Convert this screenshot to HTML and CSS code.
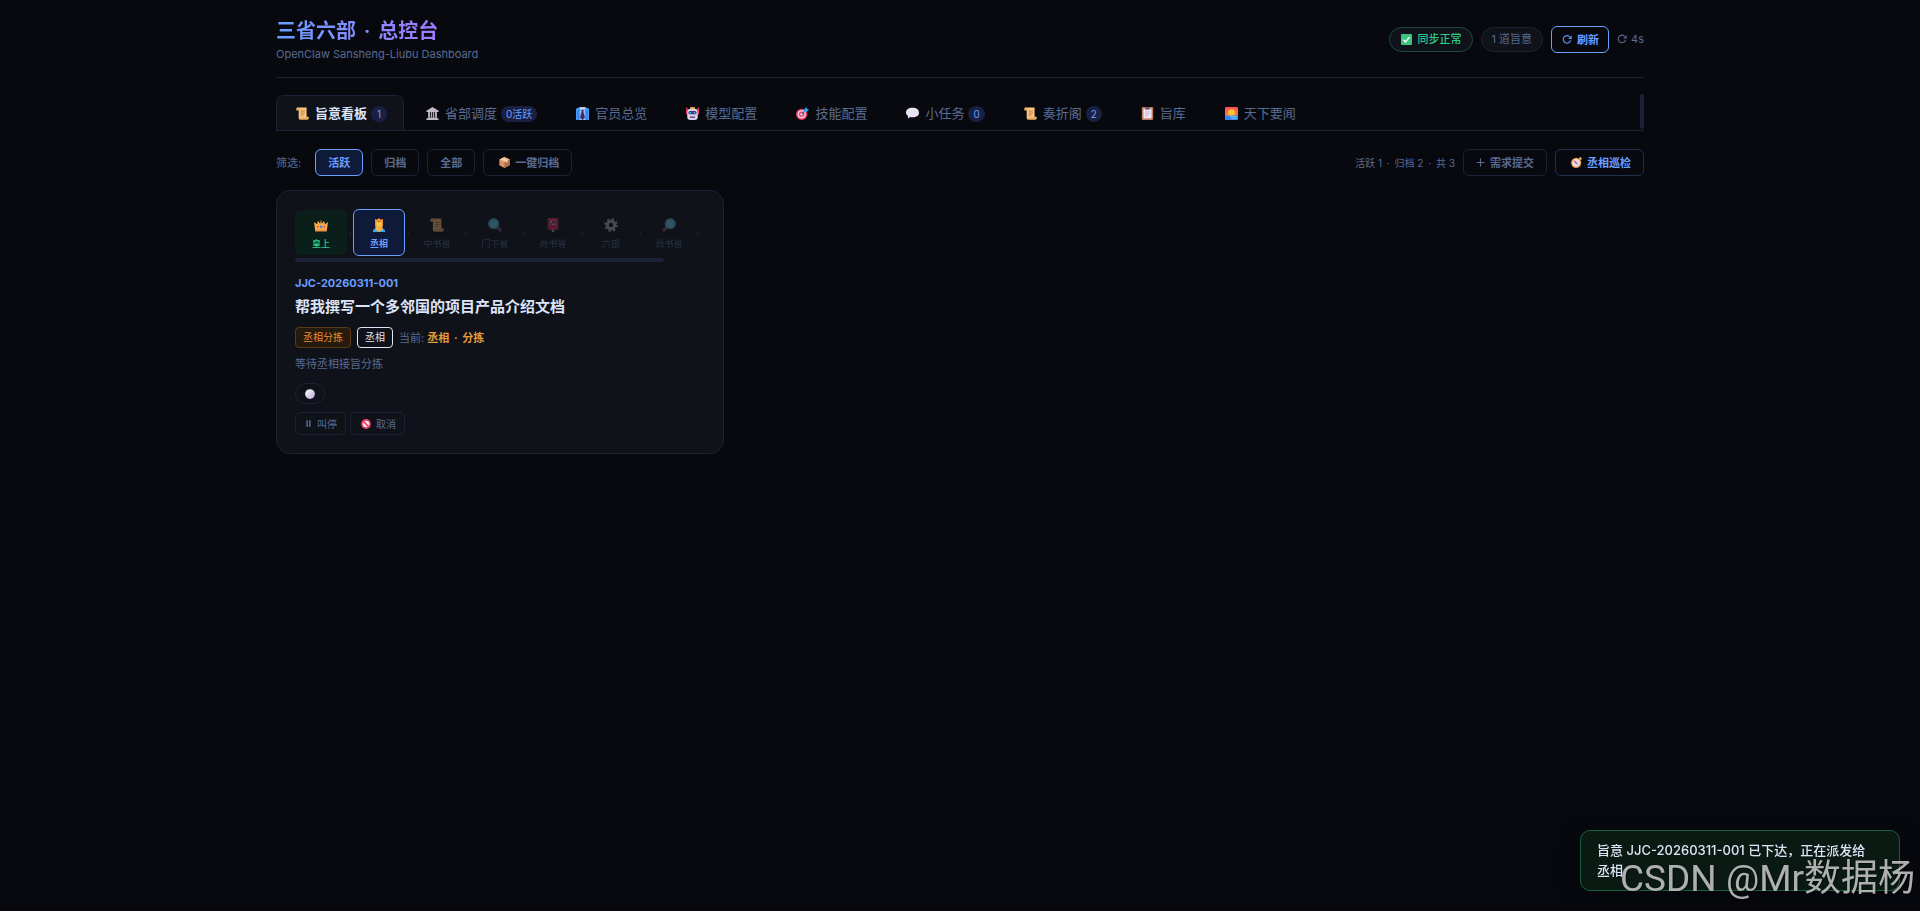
FILE: index.html
```html
<!DOCTYPE html>
<html lang="zh-CN">
<head>
<meta charset="UTF-8">
<meta name="viewport" content="width=device-width, initial-scale=1">
<title>三省六部 · 总控台</title>
<link rel="stylesheet" href="styles.css">
</head>
<body>
<svg class="sprite" aria-hidden="true">
  <defs>
    <linearGradient id="ball" x1="0" y1="0" x2="1" y2="1"><stop offset="0" stop-color="#fff"/><stop offset="1" stop-color="#bfa8d8"/></linearGradient>
    <linearGradient id="sky" x1="0" y1="0" x2="0" y2="1"><stop offset="0" stop-color="#fb4f5e"/><stop offset="1" stop-color="#ff8a4a"/></linearGradient>
  </defs>
  <symbol id="i-scroll" viewBox="0 0 16 16">
    <path d="M0.500 3C.5 1 1.500 .5 2.500 .5H13V12H15.500V13.500C15.500 15 14.500 15.500 13.500 15.500H5C4 15.500 3.300 14.500 3.300 13.500V4H.5Z" fill="#fbc57c"/>
    <path d="M.5 3C.5 1 1.500 .5 2.500 .5S4 1.700 4 2.500V4H.5ZM5 13H15.500C15.500 14.800 14.500 15.500 13.500 15.500H5Z" fill="#e9a863"/>
    <path d="M5.500 5H11M5.500 7.500H11M5.500 10H9.500" stroke="#bd7044" stroke-width="1"/>
  </symbol>
  <symbol id="i-temple" viewBox="0 0 16 16">
    <path d="M8 0L15.500 4.500V6H.5V4.500ZM2 13H14V14H15.500V16H.5V14H2Z" fill="#c2b8c8"/>
    <path d="M2.500 6H5V13H2.500ZM6 6H7.500V13H6ZM8.500 6H10V13H8.500ZM11 6H13.500V13H11Z" fill="#b4aabe"/>
  </symbol>
  <symbol id="i-tie" viewBox="0 0 16 16">
    <path d="M0 2L5 0H11L16 2V16H0Z" fill="#459df5"/><path d="M2.500 4V16M13.500 4V16" stroke="#2a6fd6" stroke-width="1"/>
    <path d="M4 .5H12L8 6Z" fill="#e9e2f4"/><path d="M5 3L8 5L11 3V16H5Z" fill="#8bc4fa"/>
    <path d="M6.500 3H9.500L9 5.500L11 13L8 16L5 13L7 5.500Z" fill="#4a2467"/>
  </symbol>
  <symbol id="i-robot" viewBox="0 0 16 16">
    <path d="M0 1H2V9H0ZM14 1H16V9H14Z" fill="#e3345f"/><path d="M5 0H11V3H5Z" fill="#e89a3c"/>
    <rect x="1.500" y="2" width="13" height="14" rx="4" fill="#dccfe8"/><rect x="3" y="5" width="10" height="4" rx="2" fill="#35305c"/>
    <circle cx="5.500" cy="7" r="1.200" fill="#4bb5fa"/><circle cx="10.500" cy="7" r="1.200" fill="#4bb5fa"/><path d="M5 12.500H11" stroke="#3a2c55" stroke-width="1.500"/>
  </symbol>
  <symbol id="i-target" viewBox="0 0 16 16">
    <circle cx="7" cy="9" r="7" fill="#ed3f66"/><circle cx="7" cy="9" r="5" fill="#f5d8e4"/><circle cx="7" cy="9" r="3.400" fill="#ed3f66"/><circle cx="7" cy="9" r="1.500" fill="#fff"/>
    <path d="M7 9L13 3" stroke="#215fa5" stroke-width="1.400"/><path d="M10 3L13 0L13.500 2.500L16 3L13 6H10Z" fill="#35a6ee"/>
  </symbol>
  <symbol id="i-bubble" viewBox="0 0 16 16"><path d="M8 1C13 1 16 3.500 16 7S13 12.500 8 12.500C7 12.500 6 12.400 5.200 12.200L2.500 14V11C1 10 0 8.700 0 7C0 3.500 3 1 8 1Z" fill="#eae1f3"/></symbol>
  <symbol id="i-clip" viewBox="0 0 16 16"><rect x="1" y="0" width="14" height="16" rx="1.500" fill="#c47a5c"/><path d="M3 2H13V14H3Z" fill="#f1e8f8"/><rect x="5" y="0" width="6" height="3.500" rx="1" fill="#6d617b"/><path d="M5 6H11M5 8.500H11M5 11H9" stroke="#b8abc8"/></symbol>
  <symbol id="i-sunrise" viewBox="0 0 16 16"><rect width="16" height="16" rx="1.500" fill="url(#sky)"/><circle cx="8" cy="7" r="4.300" fill="#fdc52b"/><path d="M0 10.500H16V14.500A1.500 1.500 0 0 1 14.500 16H1.500A1.500 1.500 0 0 1 0 14.500Z" fill="#3b82f6"/><path d="M6 12H15M8 14H14" stroke="#69d1fa" stroke-width="1.200"/></symbol>
  <symbol id="i-box" viewBox="0 0 16 16"><path d="M8 0L15.500 3.500V12L8 16L.5 12V3.500Z" fill="#d99465"/><path d="M8 7.500L15.500 3.500V12L8 16Z" fill="#b16c48"/><path d="M8 0L15.500 3.500L8 7.500L.5 3.500Z" fill="#edb98c"/><path d="M4 1.900L11.500 5.600V8.500" fill="none" stroke="#f9dfc0" stroke-width="1.600"/></symbol>
  <symbol id="i-check" viewBox="0 0 16 16"><rect width="16" height="16" rx="1.500" fill="#3fc380"/><path d="M3.500 8.500L6.500 11.500L12.500 4.500" fill="none" stroke="#fff" stroke-width="2"/></symbol>
  <symbol id="i-refresh" viewBox="0 0 16 16"><path d="M13.800 9.300A6 6 0 1 1 12.600 4" fill="none" stroke="currentColor" stroke-width="1.700"/><path d="M15.500 1.500V7H10Z" fill="currentColor"/></symbol>
  <symbol id="i-plus" viewBox="0 0 16 16"><path d="M8 1V15M1 8H15" stroke="currentColor" stroke-width="2"/></symbol>
  <symbol id="i-compass" viewBox="0 0 16 16"><circle cx="13.500" cy="2.500" r="2" fill="#f4ae3a"/><circle cx="7.500" cy="8.500" r="7.500" fill="#e99a38"/><circle cx="7.500" cy="8.500" r="5.600" fill="#e7deee"/><path d="M4 5L8.200 7.800L6.800 9.200Z" fill="#e63958" stroke="#e63958" stroke-width=".6"/><path d="M11 12L8.200 7.800L6.800 9.200Z" fill="#7b6f8c"/></symbol>
  <symbol id="i-crown" viewBox="0 0 16 16"><path d="M0 4.500L3.500 7L4.500 3L7 6.500L8 1.500L9 6.500L11.500 3L12.500 7L16 4.500L14.500 15H1.500Z" fill="#fbab47"/><path d="M1.500 15L1.200 13H14.800L14.500 15Z" fill="#f0954a"/><circle cx="8" cy="10" r="1.500" fill="#3d7df0"/><circle cx="4.300" cy="10" r="1" fill="#e63958"/><circle cx="11.700" cy="10" r="1" fill="#e63958"/></symbol>
  <symbol id="i-prince" viewBox="0 0 16 16"><path d="M3.500 1L6 2L8 0L10 2L12.500 1V10H3.500Z" fill="#f59e32"/><circle cx="8" cy="6.500" r="3" fill="#fcc64c"/><path d="M1 16C1 12.500 4 11.500 8 11.500S15 12.500 15 16Z" fill="#38a5ee"/><path d="M4.500 9H11.500L12.500 13L8 16L3.500 13Z" fill="#f7b048"/><path d="M6 4H10" stroke="#b9552d" stroke-width="1"/></symbol>
  <symbol id="i-lens" viewBox="0 0 16 16"><path d="M10 10L14 14" stroke="#8a4a78" stroke-width="3.400" stroke-linecap="round"/><circle cx="6.500" cy="6.500" r="5.700" fill="#6fd0e4" stroke="#3b9ac0" stroke-width="1.500"/></symbol>
  <symbol id="i-post" viewBox="0 0 16 16"><path d="M6.500 12H9.500V16H6.500Z" fill="#a99bb0"/><rect x="2" y="0" width="12" height="13.500" rx="1.500" fill="#e0315d"/><path d="M5 3H11V8H5Z" fill="#cfc1d8"/><path d="M6 7.500L8 4.500H10V6.500" fill="none" stroke="#5b2444" stroke-width="1.500"/></symbol>
  <symbol id="i-gear" viewBox="0 0 16 16"><circle cx="8" cy="8" r="4.200" fill="none" stroke="#b5aabd" stroke-width="3.400"/><circle cx="8" cy="8" r="6.600" fill="none" stroke="#b5aabd" stroke-width="2.400" stroke-dasharray="2.600 2.584"/></symbol>
  <symbol id="i-ball" viewBox="0 0 16 16"><circle cx="8" cy="8" r="7.800" fill="url(#ball)"/></symbol>
  <symbol id="i-pause" viewBox="0 0 16 16"><path d="M5.500 2V14M10.500 2V14" stroke="currentColor" stroke-width="2.600"/></symbol>
  <symbol id="i-ban" viewBox="0 0 16 16"><circle cx="8" cy="8" r="6.600" fill="#f8ecf4" stroke="#ec3f64" stroke-width="2.600"/><path d="M3.500 3.500L12.500 12.500" stroke="#ec3f64" stroke-width="2.600"/></symbol>
</svg>

<div class="wrap">
  <header class="hdr">
    <div>
      <h1 class="logo">三省六部 <span class="sep-lg">·</span> 总控台</h1>
      <p class="sub">OpenClaw Sansheng-Liubu Dashboard</p>
    </div>
    <div class="hdr-right">
      <span class="chip chip-ok"><svg class="ico"><use href="#i-check"/></svg>同步正常</span>
      <span class="chip">1 道旨意</span>
      <button class="btn btn-refresh" type="button"><svg class="ico"><use href="#i-refresh"/></svg>刷新</button>
      <span class="countdown"><svg class="ico"><use href="#i-refresh"/></svg>4s</span>
    </div>
  </header>

  <div class="tabs">
    <nav class="tab-list">
      <button class="tab active" type="button"><svg class="ico"><use href="#i-scroll"/></svg>旨意看板<span class="badge">1</span></button>
      <button class="tab" type="button"><svg class="ico"><use href="#i-temple"/></svg>省部调度<span class="badge">0活跃</span></button>
      <button class="tab" type="button"><svg class="ico"><use href="#i-tie"/></svg>官员总览</button>
      <button class="tab" type="button"><svg class="ico"><use href="#i-robot"/></svg>模型配置</button>
      <button class="tab" type="button"><svg class="ico"><use href="#i-target"/></svg>技能配置</button>
      <button class="tab" type="button"><svg class="ico"><use href="#i-bubble"/></svg>小任务<span class="badge">0</span></button>
      <button class="tab" type="button"><svg class="ico"><use href="#i-scroll"/></svg>奏折阁<span class="badge">2</span></button>
      <button class="tab" type="button"><svg class="ico"><use href="#i-clip"/></svg>旨库</button>
      <button class="tab" type="button"><svg class="ico"><use href="#i-sunrise"/></svg>天下要闻</button>
    </nav>
    <div class="thumb-y"></div>
  </div>

  <div class="filters">
    <span class="filter-label">筛选:</span>
    <button class="btn on" type="button">活跃</button>
    <button class="btn" type="button">归档</button>
    <button class="btn" type="button">全部</button>
    <button class="btn" type="button"><svg class="ico"><use href="#i-box"/></svg>一键归档</button>
    <span class="counts">活跃 1 <span class="sep">·</span> 归档 2 <span class="sep">·</span> 共 3</span>
    <button class="btn" type="button"><svg class="ico ico-plus"><use href="#i-plus"/></svg>需求提交</button>
    <button class="btn btn-scan" type="button"><svg class="ico"><use href="#i-compass"/></svg>丞相巡检</button>
  </div>

  <main class="grid">
    <article class="card">
      <div class="pipe">
        <div class="node done"><svg class="node-ico"><use href="#i-crown"/></svg><span>皇上</span></div><span class="arrow">›</span>
        <div class="node current"><svg class="node-ico"><use href="#i-prince"/></svg><span>丞相</span></div><span class="arrow">›</span>
        <div class="node"><svg class="node-ico"><use href="#i-scroll"/></svg><span>中书省</span></div><span class="arrow">›</span>
        <div class="node"><svg class="node-ico"><use href="#i-lens"/></svg><span>门下省</span></div><span class="arrow">›</span>
        <div class="node"><svg class="node-ico"><use href="#i-post"/></svg><span>尚书省</span></div><span class="arrow">›</span>
        <div class="node"><svg class="node-ico"><use href="#i-gear"/></svg><span>六部</span></div><span class="arrow">›</span>
        <div class="node"><svg class="node-ico flip"><use href="#i-lens"/></svg><span>尚书省</span></div><span class="arrow">›</span>
      </div>
      <div class="thumb-x"></div>
      <div class="task-id">JJC-20260311-001</div>
      <h2 class="task-title">帮我撰写一个多邻国的项目产品介绍文档</h2>
      <div class="meta">
        <span class="tag tag-state">丞相分拣</span>
        <span class="tag tag-dept">丞相</span>
        <span class="now">当前: <b>丞相 <span class="sep">·</span> 分拣</b></span>
      </div>
      <p class="hint">等待丞相接旨分拣</p>
      <div class="heart"><svg class="ico"><use href="#i-ball"/></svg></div>
      <div class="actions">
        <button class="act" type="button"><svg class="ico ico-pause"><use href="#i-pause"/></svg>叫停</button>
        <button class="act" type="button"><svg class="ico"><use href="#i-ban"/></svg>取消</button>
      </div>
    </article>
  </main>
</div>

<div class="toast" role="status">旨意 JJC-20260311-001 已下达，正在派发给丞相</div>
<div class="watermark">CSDN @Mr数据杨</div>
</body>
</html>
```
FILE: styles.css
```css
:root {
  --bg: #07090f;
  --panel: #0f1219;
  --line: #1c2236;
  --text: #dde4f8;
  --muted: #5a6b92;
  --acc: #6a9eff;
  --acc2: #a07aff;
  --ok: #2ecc8a;
}
* { box-sizing: border-box; }
body {
  margin: 0;
  min-height: 100vh;
  background: var(--bg);
  color: var(--text);
  font-family: Inter, "Noto Sans CJK SC", sans-serif;
  font-size: 13px;
  line-height: 20px;
}
button { font-family: inherit; cursor: pointer; }
h1, h2, p { margin: 0; }
.sprite { position: absolute; width: 0; height: 0; }
.ico { width: 11px; height: 11px; flex: none; margin: 0 5px 0 3px; }
.sep { margin: 0 2px; }
.sep-lg { margin: 0 3px; }
.wrap { max-width: 1400px; margin: 0 auto; padding: 16px; }

.hdr {
  display: flex;
  align-items: center;
  justify-content: space-between;
  padding-bottom: 15px;
  border-bottom: 1px solid var(--line);
  margin-bottom: 16px;
}
.logo {
  width: fit-content;
  font-size: 20px;
  line-height: 30px;
  font-weight: 700;
  background: linear-gradient(90deg, var(--acc), var(--acc2));
  -webkit-background-clip: text;
  background-clip: text;
  color: transparent;
}
.sub { font-size: 11px; line-height: 16px; color: var(--muted); }
.hdr-right { display: flex; align-items: center; gap: 8px; }
.chip {
  display: flex;
  align-items: center;
  height: 25px;
  padding: 0 10px;
  border: 1px solid var(--line);
  border-radius: 13px;
  background: var(--panel);
  color: var(--muted);
  font-size: 11px;
}
.chip-ok { border-color: #1c4a3b; color: var(--ok); font-weight: 500; }
.chip-ok .ico { margin: 0 6px 0 1px; }
.countdown { display: flex; align-items: center; font-size: 11px; color: var(--muted); }
.countdown .ico { width: 10px; height: 10px; margin: 0 4px 0 0; }

.btn {
  display: flex;
  align-items: center;
  height: 27px;
  padding: 0 12px 1px;
  border: 1px solid var(--line);
  border-radius: 6px;
  background: transparent;
  color: var(--muted);
  font-size: 11px;
  font-weight: 600;
}
.btn.on { border-color: var(--acc); background: #0f1a38; color: var(--acc); }
.btn-refresh { padding: 0 9px; border-color: var(--acc); color: var(--acc); }
.btn-refresh .ico { width: 10px; margin: 0 5px 0 1px; }
.btn-scan { border-color: #1f2f50; color: var(--acc); }
.ico-plus { width: 9px; margin: 0 5px 0 0; }

.tabs { display: flex; justify-content: space-between; border-bottom: 1px solid var(--line); }
.tab-list { display: flex; gap: 2px; padding-top: 1px; }
.tab {
  display: flex;
  align-items: center;
  height: 35px;
  padding: 0 16px 2px;
  border: 1px solid transparent;
  border-bottom: 0;
  border-radius: 8px 8px 0 0;
  background: transparent;
  color: var(--muted);
  font-size: 13px;
  white-space: nowrap;
}
.tab .ico { width: 13px; height: 13px; margin: 2px 6px 0 3px; }
.tab.active { border-color: var(--line); background: var(--panel); color: var(--text); font-weight: 700; }
.badge {
  min-width: 16px;
  height: 16px;
  margin: 3px 0 0 4px;
  padding: 0 5px;
  border-radius: 8px;
  background: #192041;
  color: var(--acc);
  font-size: 10px;
  font-weight: 400;
  line-height: 16px;
}
.thumb-y { width: 4px; height: 35px; border-radius: 2px; background: var(--line); }

.filters { display: flex; align-items: center; gap: 8px; padding: 18px 0 14px; }
.filter-label { margin-right: 6px; font-size: 11px; color: var(--muted); }
.counts { margin-left: auto; font-size: 10px; color: var(--muted); }

.grid { display: grid; grid-template-columns: repeat(auto-fill, minmax(420px, 1fr)); gap: 12px; }
.card {
  padding: 18px;
  border: 1px solid var(--line);
  border-radius: 14px;
  background: var(--panel);
}
.pipe { display: flex; align-items: center; overflow: hidden; }
.node {
  display: flex;
  flex: none;
  flex-direction: column;
  align-items: center;
  gap: 5px;
  width: 52px;
  padding: 8px 0 4px;
  border-radius: 6px;
  color: var(--muted);
  font-size: 9px;
  line-height: 14px;
}
.node-ico { width: 14px; height: 14px; }
.flip { transform: scaleX(-1); }
.node:not(.done):not(.current) { opacity: .35; }
.done { background: #0b1f1a; color: var(--ok); font-weight: 500; }
.current { border: 1px solid var(--acc); background: #0f1a38; color: var(--acc); font-weight: 700; }
.arrow { flex: none; width: 6px; text-align: center; font-size: 9px; line-height: 14px; color: #1f263a; }
.thumb-x { width: 90%; height: 4px; margin: 2px 0 13px; border-radius: 2px; background: #1c2236; }
.task-id { font-size: 11px; line-height: 16px; font-weight: 700; color: var(--acc); }
.task-title { margin: 5px 0 9px; font-size: 15px; line-height: 22px; font-weight: 700; }
.meta { display: flex; align-items: center; gap: 6px; }
.tag { height: 21px; padding: 0 7px; border: 1px solid; border-radius: 4px; font-size: 10px; line-height: 19px; }
.tag-state { border-color: #5a3a17; background: #261a0f; color: #e8912d; }
.tag-dept { color: var(--text); }
.now { font-size: 11px; color: var(--muted); }
.now b { color: #e89a3c; }
.hint { margin: 6px 0 9px; font-size: 11px; color: var(--muted); }
.heart {
  display: flex;
  align-items: center;
  width: fit-content;
  height: 21px;
  padding: 0 9px;
  border: 1px solid var(--line);
  border-radius: 11px;
}
.heart .ico { width: 10px; height: 10px; margin: 0; }
.actions { display: flex; gap: 4px; margin-top: 8px; }
.act {
  display: flex;
  align-items: center;
  height: 23px;
  padding: 0 8px;
  border: 1px solid var(--line);
  border-radius: 5px;
  background: transparent;
  color: var(--muted);
  font-size: 10px;
}
.act .ico { width: 10px; height: 10px; margin: 0 5px 0 2px; }
.act .ico-pause { width: 9px; height: 9px; margin: 0 4px 0 0; }

.toast {
  position: fixed;
  right: 20px;
  bottom: 20px;
  width: 320px;
  padding: 9px 24px 10px 16px;
  border: 1px solid #17603f;
  border-radius: 10px;
  background: #0a1912;
  box-shadow: 0 8px 24px rgba(0, 0, 0, .4);
  font-weight: 500;
}
.watermark {
  position: fixed;
  right: 5px;
  bottom: 8px;
  color: rgba(205, 205, 205, .85);
  font-family: Roboto, "Noto Sans CJK SC", sans-serif;
  font-size: 37px;
  line-height: 48px;
  text-shadow: 1px 1px 1px rgba(0, 0, 0, .5);
  pointer-events: none;
}
```
